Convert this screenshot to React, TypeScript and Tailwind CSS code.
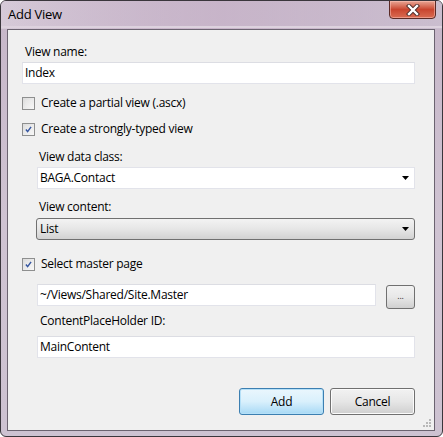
import React from 'react'

const font = "font-['Open_Sans','Noto_Sans',sans-serif] tracking-[-0.25px]"

const Checkbox = ({ checked, label }: { checked?: boolean; label: string }) => (
  <div className="flex items-center h-[16px]">
    <div className="w-[13px] h-[13px] border border-[#8e8f8f] bg-gradient-to-br from-[#dcdcdc] to-[#f8f8f8] p-[2px]">
      <div className="w-full h-full bg-gradient-to-br from-[#e4e4e4] to-[#f4f4f4] flex items-center justify-center">
        {checked && (
          <svg width="9" height="9" viewBox="0 0 9 9">
            <path d="M1.2 4.4 L3.4 7.2 L7.8 1.2" fill="none" stroke="#3556a0" strokeWidth="1.9" />
          </svg>
        )}
      </div>
    </div>
    <span className="ml-[6px] text-[12px] leading-[16px] text-black">{label}</span>
  </div>
)

const Label = ({ children, className = '' }: { children: React.ReactNode; className?: string }) => (
  <div className={`h-[16px] text-[12px] leading-[16px] text-black ${className}`}>{children}</div>
)

const TextBox = ({ value, className = '' }: { value: string; className?: string }) => (
  <div className={`h-[22px] bg-white border border-[#e2e3ea] border-t-[#dcdde3] flex items-center pl-[2px] text-[12px] text-black ${className}`}>
    {value}
  </div>
)

const Arrow = () => (
  <svg width="7" height="4" viewBox="0 0 7 4" className="mr-[5px]">
    <path d="M0 0 H7 L3.5 4 Z" fill="#000" />
  </svg>
)

export default function App() {
  return (
    <div className={`w-[443px] h-[437px] ${font}`}>
      <div className="w-full h-full flex flex-col rounded-[6px] border border-[#3a363c] bg-gradient-to-b from-[#c6b6c8] via-[#cfc3d2] to-[#cdc2d1] overflow-hidden">
        {/* title bar */}
        <div className="h-[28px] flex items-start justify-between bg-gradient-to-r from-[#d6cad8] via-[#c2aec5] to-[#d6cbd9] relative">
          <div className="absolute inset-0 bg-gradient-to-r from-transparent via-[#cbb9cc]/60 to-[#bfb0c4]/50" />
          <div className="absolute inset-x-0 bottom-[1px] h-[2px] bg-[#ddd2de]" />
          <span className="ml-[7px] mt-[5px] text-[13px] leading-[16px] text-black relative">Add View</span>
          <div className="relative mr-[6px] w-[47px] h-[19px] -mt-px rounded-b-[4px] border border-[#5b2a26] bg-gradient-to-b from-[#e8a595] via-[#c9452f] to-[#d96b52] flex items-center justify-center shadow-[inset_0_0_0_1px_rgba(255,200,190,0.5)]">
            <svg width="14" height="12" viewBox="0 0 14 12">
              <path d="M3 2 L11 10 M11 2 L3 10" stroke="#4a2a28" strokeWidth="4.2" strokeLinecap="square" />
              <path d="M3 2 L11 10 M11 2 L3 10" stroke="#ffffff" strokeWidth="2.4" strokeLinecap="square" />
            </svg>
          </div>
        </div>

        {/* client area */}
        <div className="ml-[6px] mr-[7px] mb-[5px] flex-1 border border-[#6b6370] bg-[#f0f0f0] pl-[14px] pr-[19px] flex flex-col relative">
          <Label className="mt-[14px] pl-[3px]">View name:</Label>
          <TextBox value="Index" className="mt-[2px]" />

          <div className="mt-[11px]">
            <Checkbox label="Create a partial view (.ascx)" />
          </div>
          <div className="mt-[10px]">
            <Checkbox checked label="Create a strongly-typed view" />
          </div>

          <div className="pl-[15px] flex flex-col">
            <Label className="mt-[12px] pl-[2px]">View data class:</Label>
            <div className="mt-[2px] h-[22px] bg-white border border-[#e2e3ea] flex items-center justify-between pl-[2px] text-[12px] text-black">
              BAGA.Contact
              <Arrow />
            </div>
            <Label className="mt-[10px] pl-[2px]">View content:</Label>
            <div className="mt-[3px] -ml-px h-[22px] rounded-[3px] border border-[#707070] bg-gradient-to-b from-[#f3f3f3] via-[#e6e6e6] to-[#d2d2d2] flex items-center justify-between pl-[3px] text-[12px] text-black">
              List
              <Arrow />
            </div>
          </div>

          <div className="mt-[16px]">
            <Checkbox checked label="Select master page" />
          </div>

          <div className="pl-[15px] flex flex-col">
            <div className="mt-[12px] flex items-start">
              <TextBox value="~/Views/Shared/Site.Master" className="w-[339px] pl-[1px]" />
              <div className="ml-[10px] mt-px w-[29px] h-[24px] rounded-[3px] border border-[#707070] bg-gradient-to-b from-[#f2f2f2] via-[#e8e8e8] to-[#d0d0d0] flex items-center justify-center text-[9px] leading-none text-[#333] pb-[3px]">
                ...
              </div>
            </div>
            <Label className="mt-[4px] pl-[3px]">ContentPlaceHolder ID:</Label>
            <TextBox value="MainContent" className="mt-[7px]" />
          </div>

          <div className="mt-[30px] flex justify-end gap-[6px]">
            <div className="w-[85px] h-[27px] rounded-[3px] border border-[#3c7fb1] bg-gradient-to-b from-[#eaf6fd] via-[#d9f0fc] to-[#a7d9f5] shadow-[inset_0_0_0_1px_#b5e0f8] flex items-center justify-center text-[12px] text-black">
              Add
            </div>
            <div className="w-[85px] h-[27px] rounded-[3px] border border-[#707070] bg-gradient-to-b from-[#f2f2f2] via-[#e6e6e6] to-[#cfcfcf] shadow-[inset_0_0_0_1px_#fbfbfb] flex items-center justify-center text-[12px] text-black">
              Cancel
            </div>
          </div>

          {/* resize grip */}
          <svg width="10" height="10" viewBox="0 0 10 10" className="absolute right-[2px] bottom-[2px]">
            <g fill="#b8b8b8">
              <rect x="7" y="1" width="2" height="2" />
              <rect x="4" y="4" width="2" height="2" />
              <rect x="7" y="4" width="2" height="2" />
              <rect x="1" y="7" width="2" height="2" />
              <rect x="4" y="7" width="2" height="2" />
              <rect x="7" y="7" width="2" height="2" />
            </g>
          </svg>
        </div>
      </div>
    </div>
  )
}
